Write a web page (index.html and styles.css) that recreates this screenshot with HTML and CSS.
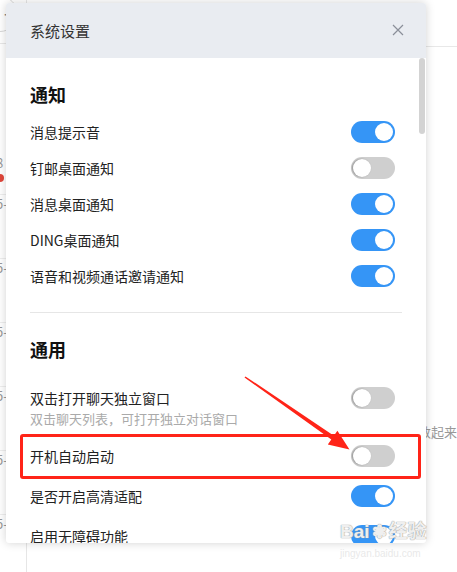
FILE: index.html
```html
<!DOCTYPE html>
<html lang="zh-CN">
<head>
  <meta charset="UTF-8">
  <meta name="viewport" content="width=device-width, initial-scale=1.0">
  <title>系统设置</title>
  <link rel="stylesheet" href="styles.css">
</head>
<body>

  <div class="app">
    <div class="app-side">
      <div class="add-btn">+</div>
      <div class="side-list">
        <div class="side-item">8</div>
        <div class="side-item dot"></div>
        <div class="side-item">5-</div>
        <div class="side-item">5-</div>
        <div class="side-item">5-</div>
        <div class="side-item">5-</div>
        <div class="side-item">5-</div>
        <div class="side-item">5-13</div>
      </div>
    </div>
    <div class="app-main">
      <div class="app-top"></div>
      <div class="app-content">
        <div class="green-ball"></div>
        <div class="hint">数起来</div>
      </div>
    </div>
  </div>

  <!-- 设置弹窗 -->
  <div class="dialog">
    <div class="dialog-header">
      <span class="dialog-title">系统设置</span>
      <svg class="close" width="12" height="12" viewBox="0 0 12 12">
        <path d="M1 1 L11 11 M11 1 L1 11" stroke="#8a8f99" stroke-width="1.2" fill="none"/>
      </svg>
    </div>

    <div class="dialog-body">
      <h2 class="section-title">通知</h2>
      <div class="row"><span>消息提示音</span><span class="switch on"></span></div>
      <div class="row"><span>钉邮桌面通知</span><span class="switch"></span></div>
      <div class="row"><span>消息桌面通知</span><span class="switch on"></span></div>
      <div class="row"><span>DING桌面通知</span><span class="switch on"></span></div>
      <div class="row"><span>语音和视频通话邀请通知</span><span class="switch on"></span></div>

      <div class="divider"></div>

      <h2 class="section-title second">通用</h2>
      <div class="row row-desc">
        <div>
          <div class="label">双击打开聊天独立窗口</div>
          <div class="desc">双击聊天列表，可打开独立对话窗口</div>
        </div>
        <span class="switch"></span>
      </div>
      <div class="row tall marked"><span>开机自动启动</span><span class="switch"></span></div>
      <div class="row tall"><span>是否开启高清适配</span><span class="switch on"></span></div>
      <div class="row tall"><span>启用无障碍功能</span><span class="switch on"></span></div>
    </div>

    <div class="scrollbar"></div>
  </div>

  <svg class="arrow" width="457" height="572" viewBox="0 0 457 572">
    <polygon points="244.5,377.6 245.5,376.4 333.9,435.8 337.4,430.8 349.5,449.5 327.8,444.4 331.3,439.4" fill="#ff2418"/>
  </svg>

  <div class="watermark">
    <div class="wm-logo">Bai<span class="paw">&#x2743;</span>经验</div>
    <div class="wm-url">jingyan.baidu.com</div>
  </div>

</body>
</html>
```

FILE: styles.css
```css
body {
  margin: 0;
  padding: 0;
  width: 457px;
  height: 572px;
  overflow: hidden;
  font-family: "Noto Sans CJK SC", "Noto Sans", sans-serif;
  background-color: #fff;
  color: #222;
}

/* фон — окно приложения */
.app {
  display: flex;
  height: 572px;
}

.app-side {
  width: 35px;
  border-right: 1px solid #e6e6e6;
  position: relative;
}

.add-btn {
  width: 36px;
  height: 36px;
  margin: -4px 0 0 -18px;
  border: 1px solid #d8d8d8;
  border-radius: 50%;
  font-size: 20px;
  line-height: 34px;
  text-align: right;
  color: #888;
  padding-right: 2px;
  box-sizing: border-box;
}

.side-list {
  margin-top: 11px;
  border-top: 1px solid #e8e8e8;
  padding-top: 110px;
}

.side-item {
  height: 63px;
  border-bottom: 1px solid #eee;
  font-size: 13px;
  line-height: 18px;
  color: #999;
  margin-left: -4px;
}

.side-item:first-child {
  height: 20px;
  border-bottom: none;
}

.side-item.dot {
  height: 20px;
  position: relative;
}

.side-item.dot::before {
  content: "";
  position: absolute;
  left: 0;
  top: 0;
  width: 8px;
  height: 8px;
  border-radius: 50%;
  background: #e0463a;
}

.app-main {
  flex: 1;
}

.app-top {
  height: 46px;
  border-bottom: 1px solid #e8e8e8;
}

.app-content {
  padding: 184px 0 0 326px;
}

.green-ball {
  width: 70px;
  height: 70px;
  border-radius: 50%;
  background: #dcf2e5;
}

.hint {
  margin-top: 121px;
  margin-left: 65px;
  font-size: 13px;
  color: #999;
  white-space: nowrap;
}

/* диалог */
.dialog {
  position: absolute;
  left: 6px;
  top: 3px;
  width: 420px;
  height: 540px;
  background: #fff;
  border-radius: 3px;
  box-shadow: 0 0 10px rgba(0, 0, 0, 0.18);
  overflow: hidden;
}

.dialog-header {
  height: 55px;
  background: #e9ecf1;
  display: flex;
  align-items: center;
  justify-content: space-between;
  padding: 0 22px 0 24px;
}

.dialog-title {
  font-size: 15px;
  color: #333;
}

.close {
  margin-bottom: 1px;
}

.dialog-body {
  padding: 0 31px 0 24px;
}

.section-title {
  margin: 24px 0 8px;
  font-size: 18px;
  line-height: 24px;
  font-weight: bold;
  color: #111;
}

.section-title.second {
  margin-bottom: 16px;
}

.row {
  height: 36px;
  display: flex;
  align-items: center;
  justify-content: space-between;
  font-size: 14px;
}

.row.tall {
  height: 40px;
}

.row-desc {
  height: auto;
  align-items: flex-start;
  padding: 10px 0 7px;
}

.label {
  line-height: 22px;
}

.desc {
  font-size: 13px;
  line-height: 20px;
  color: #aaa;
}

.marked {
  position: relative;
}

.marked::after {
  content: "";
  position: absolute;
  left: -10px;
  right: -26px;
  top: -2px;
  bottom: -3px;
  border: 3px solid #ff2418;
  border-radius: 3px;
}

.divider {
  height: 1px;
  background: #e6e6e6;
  margin: 18px -7px 0 0;
}

/* переключатель */
.switch {
  width: 44px;
  height: 22px;
  border-radius: 11px;
  background: #cfcfcf;
  position: relative;
  flex-shrink: 0;
}

.switch::before {
  content: "";
  position: absolute;
  top: 2px;
  left: 2px;
  width: 18px;
  height: 18px;
  border-radius: 50%;
  background: #fff;
  box-shadow: -1px 0 2px rgba(0, 0, 0, 0.3);
}

.switch.on {
  background: #3595f6;
}

.switch.on::before {
  left: 24px;
  box-shadow: none;
}

.scrollbar {
  position: absolute;
  right: 1px;
  top: 55px;
  width: 6px;
  height: 76px;
  border-radius: 3px;
  background: #d3d3d3;
}

.arrow {
  position: absolute;
  left: 0;
  top: 0;
}

.watermark {
  position: absolute;
  left: 340px;
  top: 521px;
  color: rgba(255, 255, 255, 0.85);
  text-shadow: 0 0 1px #999, 0 0 1px #999;
}

.wm-logo {
  font-family: "Liberation Sans", "Noto Sans CJK SC", sans-serif;
  font-size: 19px;
  font-weight: bold;
  line-height: 22px;
}

.paw {
  font-size: 18px;
  margin: 0 2px;
}

.wm-url {
  font-family: "Liberation Sans", sans-serif;
  font-size: 10px;
  line-height: 14px;
  margin-top: 4px;
  color: rgba(230, 230, 230, 0.9);
  text-shadow: none;
}
```
